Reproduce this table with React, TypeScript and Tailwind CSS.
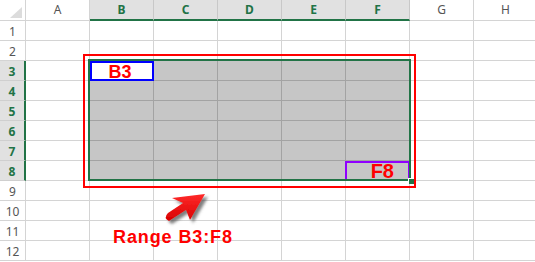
const COLS = ["A", "B", "C", "D", "E", "F", "G", "H"];
const ROWS = Array.from({ length: 12 }, (_, i) => i + 1);

// selected range B3:F8
const colSelected = (c: number) => c >= 1 && c <= 5;
const rowSelected = (r: number) => r >= 3 && r <= 8;

const labelFont = "font-['Liberation_Sans',Arial,sans-serif] font-bold leading-none text-[#ff0000]";

function CornerCell() {
  return (
    <div className="border-r border-b border-[#d4d4d4] bg-white">
      <svg width="26" height="21" viewBox="0 0 26 21">
        <polygon points="22,7 22,18 10,18" fill="#dcdcdc" />
      </svg>
    </div>
  );
}

function ColHeader({ label, index }: { label: string; index: number }) {
  const sel = colSelected(index);
  return (
    <div
      className={`flex items-center justify-center border-r text-[12px] ${
        sel
          ? "bg-[#e1e1e1] border-[#c8c8c8] border-b-2 border-b-[#217346] font-bold text-[#217346] pt-[1px]"
          : "bg-white border-[#d4d4d4] border-b text-[#555]"
      }`}
    >
      {label}
    </div>
  );
}

function RowHeader({ n }: { n: number }) {
  const sel = rowSelected(n);
  return (
    <div
      className={`flex items-center justify-center border-b text-[12px] pt-[2px] ${
        sel
          ? "bg-[#e1e1e1] border-b-[#cfcfcf] border-r-2 border-r-[#217346] font-bold text-[#217346]"
          : "bg-white border-[#d4d4d4] border-r text-[#555]"
      }`}
    >
      {n}
    </div>
  );
}

function Cell({ r, c }: { r: number; c: number }) {
  const inRange = rowSelected(r) && colSelected(c);

  // first cell of the range: white, boxed in blue
  if (r === 3 && c === 1) {
    return (
      <div className="flex items-center justify-center pr-[4px] pt-[1px] bg-white border-2 border-[#0000ff]">
        <span className={`${labelFont} text-[18px]`}>B3</span>
      </div>
    );
  }

  // last cell of the range, boxed in purple
  if (r === 8 && c === 5) {
    return (
      <div className="flex items-center justify-end pr-[14px] bg-[#c6c6c6] border-2 border-[#9000ff] -ml-px">
        <span className={`${labelFont} text-[20px]`}>F8</span>
      </div>
    );
  }

  return (
    <div
      className={`border-r border-b ${
        inRange ? "bg-[#c6c6c6] border-[#a3a3a3]" : "bg-white border-[#d4d4d4]"
      }`}
    />
  );
}

function Arrow() {
  return (
    <svg className="absolute left-[158px] top-[188px]" width="60" height="42" viewBox="158 188 60 42">
      <defs>
        <linearGradient id="arrowFill" x1="0" y1="0" x2="0" y2="1">
          <stop offset="0" stopColor="#ff2a2a" />
          <stop offset="1" stopColor="#d80000" />
        </linearGradient>
        <filter id="arrowShadow" x="-30%" y="-30%" width="160%" height="160%">
          <feDropShadow dx="3" dy="3" stdDeviation="1.6" floodColor="#555" floodOpacity="0.75" />
        </filter>
      </defs>
      <path
        d="M205,194 L172,198 L183,203 L168,213 Q163,218 169,221 L186,210 L190,220 Z"
        fill="url(#arrowFill)"
        filter="url(#arrowShadow)"
      />
    </svg>
  );
}

export default function App() {
  return (
    <div className="relative w-[535px] h-[262px] overflow-hidden bg-white font-['Noto_Sans',sans-serif]">
      <div className="grid grid-cols-[26px_repeat(8,64px)] grid-rows-[21px_repeat(12,20px)]">
        <CornerCell />
        {COLS.map((c, i) => (
          <ColHeader key={c} label={c} index={i} />
        ))}
        {ROWS.map((r) => (
          <div key={r} className="contents">
            <RowHeader n={r} />
            {COLS.map((c, i) => (
              <Cell key={c} r={r} c={i} />
            ))}
          </div>
        ))}
      </div>

      {/* red outline drawn around the range */}
      <div className="absolute left-[83px] top-[54px] w-[333px] h-[134px] border-2 border-[#ff0000]" />

      {/* selection border + fill handle */}
      <div className="absolute left-[88px] top-[59px] w-[323px] h-[122px] border-2 border-[#217346]" />
      <div className="absolute left-[408px] top-[178px] w-[6px] h-[6px] bg-[#217346] border border-white border-r-0 border-b-0" />

      <Arrow />

      <div className={`absolute left-[113px] top-[228px] ${labelFont} text-[18px] tracking-[0.9px]`}>
        Range B3:F8
      </div>
    </div>
  );
}
